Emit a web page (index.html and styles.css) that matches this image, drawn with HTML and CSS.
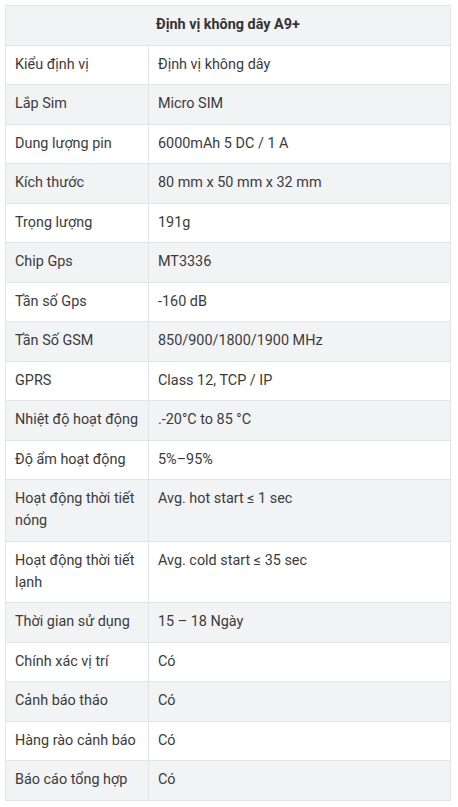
FILE: index.html
```html
<!DOCTYPE html>
<html lang="vi">
<head>
<meta charset="utf-8">
<link rel="stylesheet" href="styles.css">
</head>
<body>
<table class="spec">
  <colgroup>
    <col class="col-key">
    <col class="col-val">
  </colgroup>
  <thead>
    <tr><th colspan="2">Định vị không dây A9+</th></tr>
  </thead>
  <tbody>
    <tr><td>Kiểu định vị</td><td>Định vị không dây</td></tr>
    <tr><td>Lắp Sim</td><td>Micro SIM</td></tr>
    <tr><td>Dung lượng pin</td><td>6000mAh 5 DC / 1 A</td></tr>
    <tr><td>Kích thước</td><td>80 mm x 50 mm x 32 mm</td></tr>
    <tr><td>Trọng lượng</td><td>191g</td></tr>
    <tr><td>Chip Gps</td><td>MT3336</td></tr>
    <tr><td>Tần số Gps</td><td>-160 dB</td></tr>
    <tr><td>Tần Số GSM</td><td>850/900/1800/1900 MHz</td></tr>
    <tr><td>GPRS</td><td>Class 12, TCP / IP</td></tr>
    <tr><td>Nhiệt độ hoạt động</td><td>.-20°C to 85 °C</td></tr>
    <tr><td>Độ ẩm hoạt động</td><td>5%–95%</td></tr>
    <tr><td>Hoạt động thời tiết nóng</td><td>Avg. hot start ≤ 1 sec</td></tr>
    <tr><td>Hoạt động thời tiết lạnh</td><td>Avg. cold start ≤ 35 sec</td></tr>
    <tr><td>Thời gian sử dụng</td><td>15 – 18 Ngày</td></tr>
    <tr><td>Chính xác vị trí</td><td>Có</td></tr>
    <tr><td>Cảnh báo tháo</td><td>Có</td></tr>
    <tr><td>Hàng rào cảnh báo</td><td>Có</td></tr>
    <tr><td>Báo cáo tổng hợp</td><td>Có</td></tr>
  </tbody>
</table>
</body>
</html>
```
FILE: styles.css
```css
html, body {
  margin: 0;
  padding: 0;
  background: #ffffff;
}
body {
  padding: 5px 0 0 5px;
  font-family: Roboto, "Noto Sans", "Liberation Sans", sans-serif;
  font-size: 14.4px;
  color: #3b3b3b;
}
.spec {
  border-collapse: collapse;
  width: 446px;
  table-layout: fixed;
}
.col-key {
  width: 143px;
}
.spec th,
.spec td {
  border: 1px solid #e3e4e6;
  padding: 8.25px 9px;
  line-height: 22px;
  text-align: left;
  vertical-align: top;
}
.spec th {
  text-align: center;
  font-weight: 700;
  color: #333333;
  background: #f2f3f5;
}
.spec tbody tr:nth-child(even) td {
  background: #f2f3f5;
}
.spec tbody tr:nth-child(odd) td {
  background: #ffffff;
}
```
